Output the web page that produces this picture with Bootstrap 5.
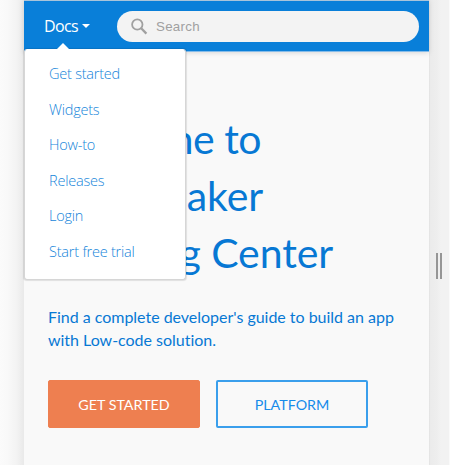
<!DOCTYPE html>
<html lang="en">
<head>
<meta charset="utf-8">
<meta name="viewport" content="width=device-width, initial-scale=1">
<title>Learning Center</title>
<link href="https://cdn.jsdelivr.net/npm/bootstrap@5.3.0/dist/css/bootstrap.min.css" rel="stylesheet">
<style>
body{font-family:Lato,sans-serif;background:#fafafa;height:465px;color:#0778d4}
.gutter-left{width:24px;flex:none;background:linear-gradient(90deg,#fbfbfb 0,#f9f9f9 30%,#f3f3f3 70%,#e9e9e9 100%)}
.screen{width:405px;flex:none;background:#f9f9f9}
.gutter-right{width:20px;flex:none;background:linear-gradient(90deg,#dedede 0,#ebebeb 1px,#eee 8px,#f2f2f2 12px,#f2f2f2 100%);padding:253px 0 0 7px;gap:2px}
.grip{width:2px;height:26px;background:#969696}
.topbar{height:52px;background:#097fd9;border-top:1px solid #a9c4da;border-bottom:1px solid #86bce9;box-shadow:0 1px 5px rgba(0,0,0,.13);padding:0 10px 0 20px}
.docs-link{font:16px/24px "Open Sans",sans-serif;letter-spacing:-.6px;color:#fff;width:73px}
.docs-link:hover{color:#fff}
.docs-link::after{border-top-width:4px;border-left-width:4px;border-right-width:4px;margin-left:3.5px;vertical-align:4px}
.docs-menu{top:48px;left:0;width:162px;height:231px;border:1px solid #d6d6d6;border-width:0 1px 1px 1px;border-radius:3px;padding:7px 0 0;font-family:"Open Sans",sans-serif;box-shadow:0 0 1px 1px rgba(0,0,0,.1)}
.docs-menu::before{content:"";position:absolute;left:32px;top:-6px;border:6px solid transparent;border-top:0;border-bottom-color:#fff}
.docs-menu .dropdown-item{font-size:14.5px;font-weight:300;line-height:35.6px;letter-spacing:-.22px;color:#1585da;padding:0 0 0 24px}
.search-box{height:31px;border-radius:16px;background:#f3f3f3;padding-left:14px;gap:8px}
.search-box input{font:13.3px/20px "Liberation Sans",sans-serif;letter-spacing:.3px;color:#999;position:relative;top:1px}
.search-box input::placeholder{color:#a0a0a0;opacity:1}
.hero{padding:58px 20px 0 24px}
.hero h1{font-size:41px;line-height:57px;font-weight:400;letter-spacing:-.08px;margin-bottom:25px}
.hero h1 span:first-child{letter-spacing:-.45px}
.intro{font-size:16px;line-height:22.5px;letter-spacing:-.02px;font-variant-ligatures:none;margin-bottom:29px}
.hero .btn{width:152px;height:48px;border-radius:2px;font-size:14.3px;line-height:22px;display:flex;align-items:center;justify-content:center;padding-top:8px}
.btn-start{background:#ee7f50;border-color:#ee7f50;color:#fff}
.btn-platform{border:2px solid #3a9fec;color:#168bea}
</style>
<script src="https://cdn.jsdelivr.net/npm/bootstrap@5.3.0/dist/js/bootstrap.bundle.min.js"></script>
</head>
<body class="d-flex overflow-hidden">
<div class="gutter-left"></div>
<div class="screen">
  <header class="topbar d-flex align-items-center position-relative">
    <div class="dropdown position-static">
      <a href="#" class="docs-link dropdown-toggle d-block text-decoration-none" data-bs-toggle="dropdown" data-bs-display="static" aria-expanded="true">Docs</a>
      <ul class="docs-menu dropdown-menu show m-0">
        <li><a class="dropdown-item" href="#">Get started</a></li>
        <li><a class="dropdown-item" href="#">Widgets</a></li>
        <li><a class="dropdown-item" href="#">How-to</a></li>
        <li><a class="dropdown-item" href="#">Releases</a></li>
        <li><a class="dropdown-item" href="#">Login</a></li>
        <li><a class="dropdown-item" href="#">Start free trial</a></li>
      </ul>
    </div>
    <div class="search-box d-flex align-items-center flex-grow-1">
      <svg width="17" height="17" viewBox="0 0 17 17" fill="none" stroke="#a0a0a0" stroke-width="1.8"><circle cx="6.3" cy="6.5" r="5.2"/><path d="M10.2 10.3 15.4 15.6" stroke-width="2.3"/></svg>
      <input type="text" class="border-0 bg-transparent p-0 w-75" placeholder="Search" aria-label="Search">
    </div>
  </header>
  <main class="hero">
    <h1><span>Welcome to</span><br>WaveMaker<br>Learning Center</h1>
    <p class="intro">Find a complete developer's guide to build an app with Low-code solution.</p>
    <div class="d-flex gap-3">
      <a href="#" class="btn btn-start">GET STARTED</a>
      <a href="#" class="btn btn-platform">PLATFORM</a>
    </div>
  </main>
</div>
<div class="gutter-right d-flex align-items-start">
  <div class="grip"></div>
  <div class="grip"></div>
</div>
</body>
</html>
